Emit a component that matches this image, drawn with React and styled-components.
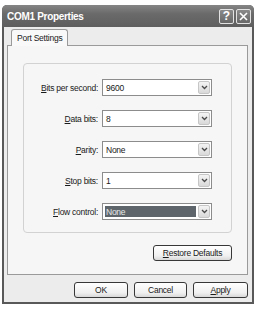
import React from "react";
import styled, { createGlobalStyle } from "styled-components";

const GlobalStyle = createGlobalStyle`
  html, body {
    margin: 0;
    background: #ffffff;
  }
  body {
    font-family: "Liberation Sans", Arial, sans-serif;
    font-size: 8.5px;
    letter-spacing: -0.25px;
    color: #1a1a1a;
  }
`;

const Window = styled.div`
  margin: 5px 0 0 2px;
  width: 252px;
  height: 299px;
  background: #595959;
  border-radius: 5px 5px 0 0;
  display: flex;
  flex-direction: column;
  overflow: hidden;
`;

const TitleBar = styled.div`
  height: 22px;
  flex: none;
  display: flex;
  align-items: center;
  padding: 0 3px 0 5px;
  background: linear-gradient(#858585, #6a6a6a 40%, #5e5e5e);
`;

const Title = styled.div`
  flex: 1;
  color: #ffffff;
  font-weight: bold;
  font-size: 10px;
  letter-spacing: -0.3px;
`;

const CaptionButton = styled.div`
  width: 15px;
  height: 15px;
  box-sizing: border-box;
  margin-left: 2px;
  border: 1px solid #e2e2e2;
  border-radius: 2px;
  background: linear-gradient(#8a8a8a, #686868);
  color: #ffffff;
  display: flex;
  align-items: center;
  justify-content: center;
  font: bold 12px "Liberation Sans", Arial, sans-serif;
  letter-spacing: 0;
`;

const Body = styled.div`
  flex: 1;
  margin: 0 2px 2px;
  background: #ececec;
  padding: 2px 4px 0 3px;
  display: flex;
  flex-direction: column;
`;

const TabStrip = styled.div`
  display: flex;
  padding-left: 4px;
  position: relative;
  z-index: 1;
`;

const Tab = styled.div`
  height: 16px;
  line-height: 16px;
  padding: 0 5px;
  border: 1px solid #9a9a9a;
  border-bottom: none;
  border-radius: 3px 3px 0 0;
  background: #f9f9f9;
  margin-bottom: -1px;
`;

const Panel = styled.div`
  height: 230px;
  box-sizing: border-box;
  border: 1px solid #9a9a9a;
  background: #f6f6f6;
  padding: 17px 15px 0;
  display: flex;
  flex-direction: column;
`;

const Group = styled.div`
  height: 170px;
  box-sizing: border-box;
  border: 1px solid #d2d2d2;
  border-radius: 4px;
  padding: 15px 19px 0 0;
  display: grid;
  grid-template-columns: 1fr 110px;
  grid-auto-rows: 17px;
  column-gap: 4px;
  row-gap: 14px;
  align-items: center;
`;

const Label = styled.div`
  text-align: right;
`;

const Combo = styled.div`
  height: 17px;
  box-sizing: border-box;
  border: 1px solid #8c8c8c;
  background: #ffffff;
  display: flex;
`;

const ComboValue = styled.div`
  flex: 1;
  display: flex;
  align-items: center;
  margin: ${(p) => (p.$selected ? "2px 1px 2px 2px" : "0")};
  padding-left: ${(p) => (p.$selected ? "1px" : "3px")};
  background: ${(p) => (p.$selected ? "#5e666c" : "transparent")};
  color: ${(p) => (p.$selected ? "#e8e8e8" : "#1a1a1a")};
`;

const ComboArrow = styled.div`
  width: 12px;
  margin: 1px;
  box-sizing: border-box;
  border: 1px solid #c6c6c6;
  border-radius: 2px;
  background: linear-gradient(#f4f4f4, #d9d9d9);
  display: flex;
  align-items: center;
  justify-content: center;
`;

const ButtonRow = styled.div`
  display: flex;
  justify-content: flex-end;
  gap: 6px;
  margin-top: ${(p) => p.$top}px;
`;

const Button = styled.div`
  width: ${(p) => p.$width}px;
  height: 16px;
  box-sizing: border-box;
  border: 1px solid #383838;
  border-radius: 3px;
  background: linear-gradient(#ffffff, #f0f0f0 70%, #d8d8d8);
  display: flex;
  align-items: center;
  justify-content: center;
`;

function Chevron() {
  return (
    <svg width="7" height="5" viewBox="0 0 7 5">
      <path d="M1 1 L3.5 3.5 L6 1" fill="none" stroke="#4a4a4a" strokeWidth="1.3" />
    </svg>
  );
}

const fields = [
  { key: "B", rest: "its per second:", value: "9600" },
  { key: "D", rest: "ata bits:", value: "8" },
  { key: "P", rest: "arity:", value: "None" },
  { key: "S", rest: "top bits:", value: "1" },
  { key: "F", rest: "low control:", value: "None", selected: true },
];

export default function App() {
  return (
    <>
      <GlobalStyle />
      <Window>
        <TitleBar>
          <Title>COM1 Properties</Title>
          <CaptionButton>?</CaptionButton>
          <CaptionButton>
            <svg width="9" height="9" viewBox="0 0 9 9">
              <path d="M1 1 L8 8 M8 1 L1 8" stroke="#fff" strokeWidth="1.6" />
            </svg>
          </CaptionButton>
        </TitleBar>
        <Body>
          <TabStrip>
            <Tab>Port Settings</Tab>
          </TabStrip>
          <Panel>
            <Group>
              {fields.map((f) => (
                <React.Fragment key={f.key}>
                  <Label>
                    <u>{f.key}</u>
                    {f.rest}
                  </Label>
                  <Combo>
                    <ComboValue $selected={f.selected}>{f.value}</ComboValue>
                    <ComboArrow>
                      <Chevron />
                    </ComboArrow>
                  </Combo>
                </React.Fragment>
              ))}
            </Group>
            <ButtonRow $top={12}>
              <Button $width={79}>
                <u>R</u>estore Defaults
              </Button>
            </ButtonRow>
          </Panel>
          <ButtonRow $top={7}>
            <Button $width={54}>OK</Button>
            <Button $width={53}>Cancel</Button>
            <Button $width={55}>
              <u>A</u>pply
            </Button>
          </ButtonRow>
        </Body>
      </Window>
    </>
  );
}
